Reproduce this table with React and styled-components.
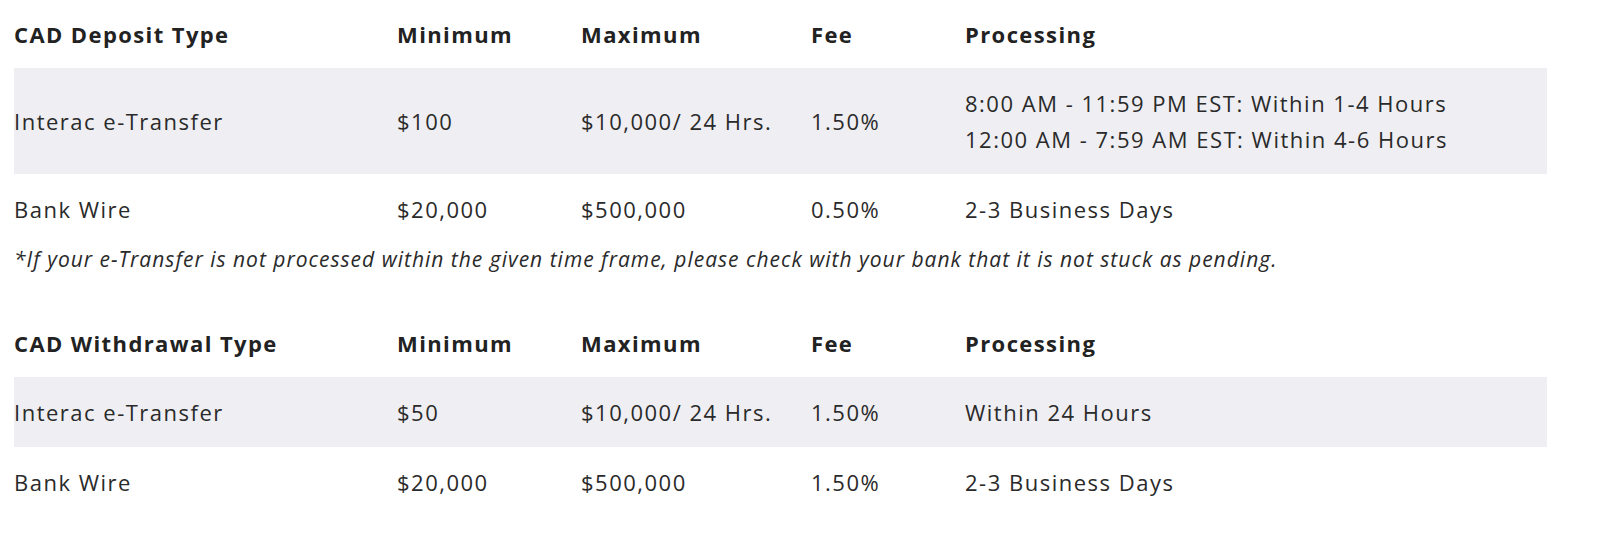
import styled, { createGlobalStyle } from "styled-components";

const GlobalStyle = createGlobalStyle`
  * { box-sizing: border-box; }
  body {
    margin: 0;
    background: #ffffff;
    font-family: "Open Sans", "Noto Sans", sans-serif;
    color: #2b2b2b;
  }
`;

const deposits = [
  { type: "Interac e-Transfer", min: "$100", max: "$10,000/ 24 Hrs.", fee: "1.50%", processing: ["8:00 AM - 11:59 PM EST: Within 1-4 Hours", "12:00 AM - 7:59 AM EST: Within 4-6 Hours"] },
  { type: "Bank Wire", min: "$20,000", max: "$500,000", fee: "0.50%", processing: ["2-3 Business Days"] },
];

const withdrawals = [
  { type: "Interac e-Transfer", min: "$50", max: "$10,000/ 24 Hrs.", fee: "1.50%", processing: ["Within 24 Hours"] },
  { type: "Bank Wire", min: "$20,000", max: "$500,000", fee: "1.50%", processing: ["2-3 Business Days"] },
];

function FeeTable({ title, rows }) {
  return (
    <StyledTable>
      <StyledRow $header>
        <StyledHeadCell>{title}</StyledHeadCell>
        <StyledHeadCell>Minimum</StyledHeadCell>
        <StyledHeadCell>Maximum</StyledHeadCell>
        <StyledHeadCell>Fee</StyledHeadCell>
        <StyledHeadCell>Processing</StyledHeadCell>
      </StyledRow>
      {rows.map((row, i) => (
        <StyledRow key={row.type} $shaded={i % 2 === 0}>
          <StyledCell>{row.type}</StyledCell>
          <StyledCell>{row.min}</StyledCell>
          <StyledCell>{row.max}</StyledCell>
          <StyledCell>{row.fee}</StyledCell>
          <StyledCell>
            {row.processing.map((line) => (
              <div key={line}>{line}</div>
            ))}
          </StyledCell>
        </StyledRow>
      ))}
    </StyledTable>
  );
}

export default function App() {
  return (
    <>
      <GlobalStyle />
      <StyledPage>
        <FeeTable title="CAD Deposit Type" rows={deposits} />
        <StyledNote>
          *If your e-Transfer is not processed within the given time frame, please check with your bank that it is not stuck as pending.
        </StyledNote>
        <FeeTable title="CAD Withdrawal Type" rows={withdrawals} />
      </StyledPage>
    </>
  );
}

const StyledPage = styled.main`
  width: 1533px;
  margin-left: 14px;
  display: flex;
  flex-direction: column;
`;

const StyledTable = styled.section`
  display: flex;
  flex-direction: column;
`;

const StyledRow = styled.div`
  display: grid;
  grid-template-columns: 383px 184px 230px 154px 1fr;
  align-items: center;
  padding: ${(p) => (p.$header ? "0" : "17px 0")};
  height: ${(p) => (p.$header ? "68px" : "auto")};
  background: ${(p) => (p.$shaded ? "#efeff3" : "transparent")};
`;

const StyledHeadCell = styled.div`
  font-size: 22px;
  font-weight: 700;
  letter-spacing: 1.4px;
  color: #222222;
  white-space: nowrap;
`;

const StyledCell = styled.div`
  font-size: 22px;
  font-weight: 400;
  letter-spacing: 1.5px;
  line-height: 36px;
  color: #2a2a2a;
  white-space: nowrap;
`;

const StyledNote = styled.p`
  margin: 0 0 35px;
  height: 30px;
  line-height: 30px;
  font-size: 21px;
  font-style: italic;
  letter-spacing: 1px;
  color: #2a2a2a;
  white-space: nowrap;
`;
